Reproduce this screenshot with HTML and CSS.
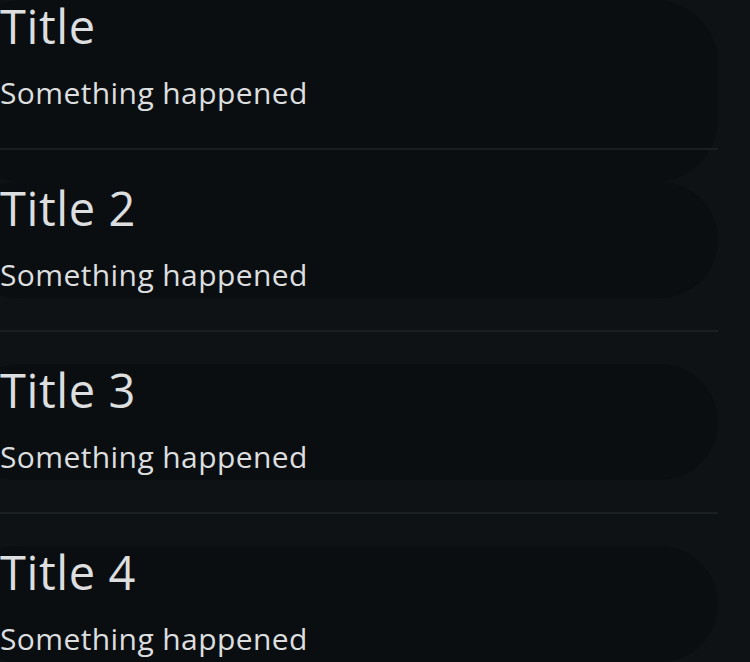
FILE: index.html
```html
<!DOCTYPE html>
<html>
<head>
<meta charset="utf-8">
<link rel="stylesheet" href="styles.css">
</head>
<body>
<ul class="list">
  <li class="item item-first">
    <div class="content">
      <div class="title">Title</div>
      <div class="subtitle">Something happened</div>
    </div>
    <div class="sep"></div>
  </li>
  <li class="item">
    <div class="content">
      <div class="title">Title 2</div>
      <div class="subtitle">Something happened</div>
    </div>
    <div class="sep"></div>
  </li>
  <li class="item">
    <div class="content">
      <div class="title">Title 3</div>
      <div class="subtitle">Something happened</div>
    </div>
    <div class="sep"></div>
  </li>
  <li class="item">
    <div class="content">
      <div class="title">Title 4</div>
      <div class="subtitle">Something happened</div>
    </div>
    <div class="sep"></div>
  </li>
</ul>
</body>
</html>
```
FILE: styles.css
```css
html, body {
  margin: 0;
  padding: 0;
  background: #0e1215;
  overflow: hidden;
}
body {
  width: 750px;
  height: 662px;
  font-family: "Open Sans", "Lato", sans-serif;
  color: #dcdedf;
}
.list {
  list-style: none;
  margin: 0;
  padding: 0;
  width: 718px;
}
.item {
  position: relative;
  height: 182px;
  display: flex;
  flex-direction: column;
}
.item::before {
  content: "";
  position: absolute;
  left: -40px;
  right: 0;
  top: 0;
  height: 116px;
  border-radius: 58px;
  background: #0a0e11;
  z-index: 0;
}
.item-first::before {
  height: 182px;
  border-radius: 63px;
}
.content {
  position: relative;
  z-index: 1;
  height: 148px;
  display: flex;
  flex-direction: column;
}
.title {
  font-size: 47px;
  line-height: 52px;
  letter-spacing: 0.6px;
}
.subtitle {
  font-size: 30px;
  line-height: 36px;
  margin-top: 23px;
  letter-spacing: 0.4px;
}
.sep {
  position: relative;
  z-index: 1;
  height: 2px;
  background: #1a1f22;
}
```
